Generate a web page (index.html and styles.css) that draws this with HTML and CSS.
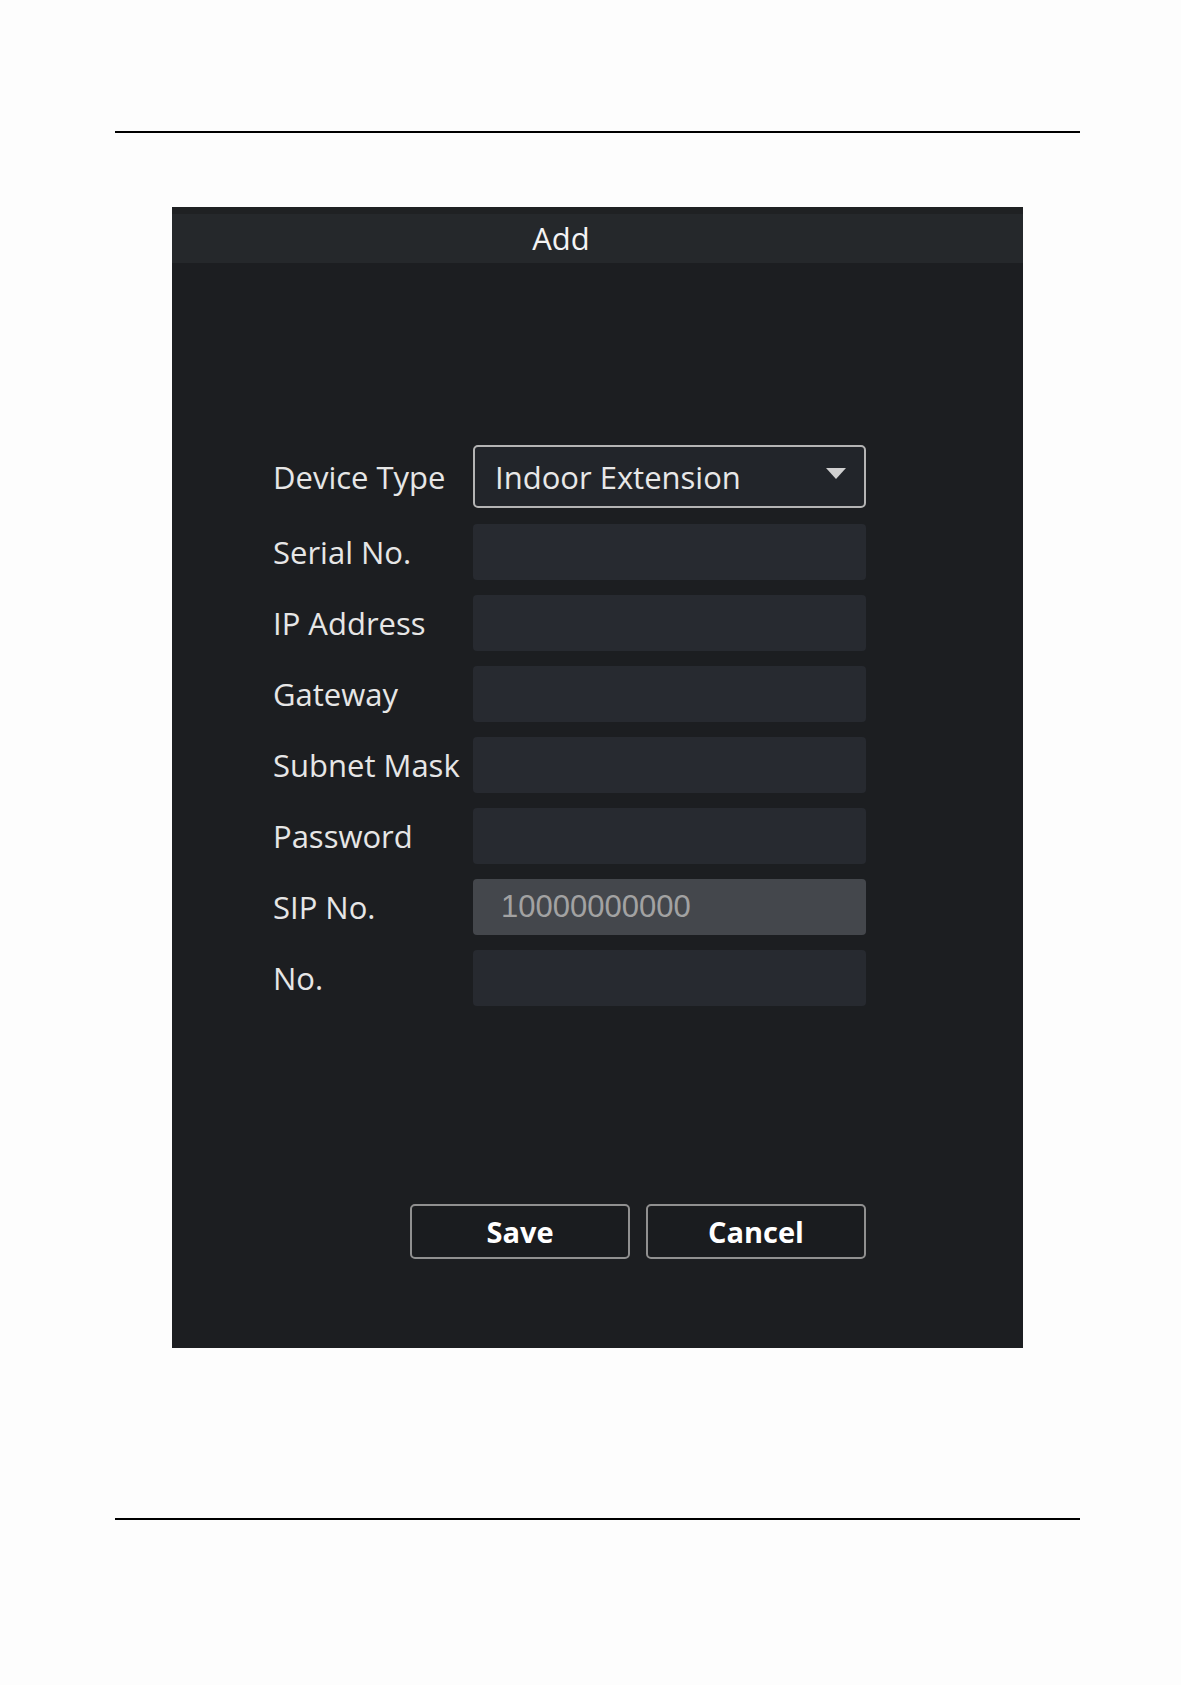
FILE: index.html
```html
<!DOCTYPE html>
<html lang="en">
<head>
  <meta charset="UTF-8">
  <meta name="viewport" content="width=device-width, initial-scale=1.0">
  <title>Add</title>
  <link rel="stylesheet" href="styles.css">
</head>
<body>
  <div class="page">
    <div class="rule"></div>
    <div class="dialog">
      <div class="dialog-title">Add</div>
      <div class="dialog-body">
        <div class="form">
          <div class="form-row">
            <label>Device Type</label>
            <div class="select">
              <span>Indoor Extension</span>
              <svg class="caret" width="20" height="11" viewBox="0 0 20 11"><path d="M0 0H20L10 11Z" fill="#d0d0d0"/></svg>
            </div>
          </div>
          <div class="form-row">
            <label>Serial No.</label>
            <div class="field"></div>
          </div>
          <div class="form-row">
            <label>IP Address</label>
            <div class="field"></div>
          </div>
          <div class="form-row">
            <label>Gateway</label>
            <div class="field"></div>
          </div>
          <div class="form-row">
            <label>Subnet Mask</label>
            <div class="field"></div>
          </div>
          <div class="form-row">
            <label>Password</label>
            <div class="field"></div>
          </div>
          <div class="form-row">
            <label>SIP No.</label>
            <div class="field disabled">10000000000</div>
          </div>
          <div class="form-row">
            <label>No.</label>
            <div class="field"></div>
          </div>
        </div>
        <div class="actions">
          <button class="btn">Save</button>
          <button class="btn">Cancel</button>
        </div>
      </div>
    </div>
    <div class="rule bottom"></div>
  </div>
</body>
</html>
```

FILE: styles.css
```css
body {
  margin: 0;
  background: #fdfdfd;
  font-family: "Open Sans", Arial, sans-serif;
}
.page {
  width: 1181px;
  min-height: 1685px;
  padding-top: 131px;
  box-sizing: border-box;
}
.rule {
  margin-left: 115px;
  width: 965px;
  height: 2px;
  background: #000;
}
.rule.bottom {
  margin-top: 170px;
}
.dialog {
  margin: 74px 0 0 172px;
  width: 851px;
  height: 1141px;
  background: #1c1e21;
  display: flex;
  flex-direction: column;
}
.dialog-title {
  height: 49px;
  border-top: 7px solid #1f2123;
  background: #25282b;
  color: #f4f4f4;
  font-size: 31px;
  line-height: 49px;
  text-align: center;
  padding-right: 73px;
}
.dialog-body {
  padding: 182px 157px 0 101px;
}
.form {
  display: flex;
  flex-direction: column;
  gap: 15px;
}
.form-row {
  display: flex;
  align-items: center;
}
.form-row label {
  width: 200px;
  color: #e6e6e6;
  font-size: 31px;
  white-space: nowrap;
}
.field {
  width: 393px;
  height: 56px;
  background: #272a30;
  border-radius: 4px;
  box-sizing: border-box;
  padding-left: 28px;
  font-family: Arial, "Liberation Sans", sans-serif;
  font-size: 31px;
  line-height: 56px;
  color: #a2a2a2;
}
.field.disabled {
  background: #44474c;
}
.select {
  width: 393px;
  height: 63px;
  margin-bottom: 1px;
  border: 2px solid #b4b4b4;
  border-radius: 5px;
  background: #22252a;
  box-sizing: border-box;
  display: flex;
  align-items: center;
  justify-content: space-between;
  padding: 0 18px 0 20px;
  color: #e8e8e8;
  font-size: 31px;
}
.caret {
  margin-top: -6px;
}
.actions {
  display: flex;
  justify-content: flex-end;
  gap: 16px;
  margin-top: 198px;
}
.btn {
  width: 220px;
  height: 55px;
  background: #1a1c1f;
  border: 2px solid #909090;
  border-radius: 5px;
  color: #fff;
  font-family: "Open Sans", Arial, sans-serif;
  font-size: 29px;
  font-weight: bold;
  cursor: pointer;
}
```
